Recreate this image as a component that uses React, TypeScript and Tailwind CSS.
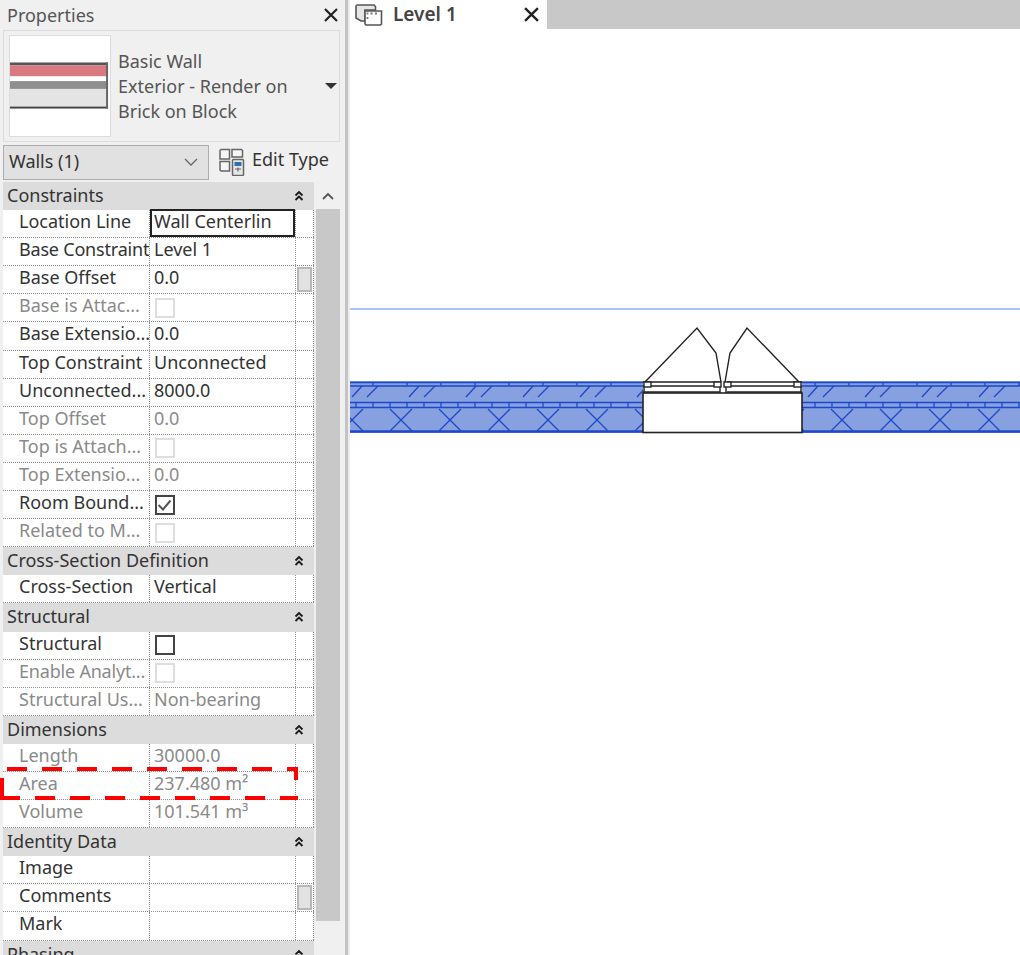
const font = { fontFamily: '"Noto Sans", sans-serif' };

type Row = { label: string; value?: string; dim?: boolean; check?: 'on' | 'off' | 'dim'; edit?: boolean; thumb?: boolean; tight?: boolean };
type Group = { title: string; rows: Row[] };

const groups: Group[] = [
	{
		title: 'Constraints',
		rows: [
			{ label: 'Location Line', value: 'Wall Centerlin', edit: true },
			{ label: 'Base Constraint', value: 'Level 1', tight: true },
			{ label: 'Base Offset', value: '0.0', thumb: true },
			{ label: 'Base is Attac...', dim: true, check: 'dim' },
			{ label: 'Base Extensio...', value: '0.0' },
			{ label: 'Top Constraint', value: 'Unconnected' },
			{ label: 'Unconnected...', value: '8000.0' },
			{ label: 'Top Offset', value: '0.0', dim: true },
			{ label: 'Top is Attach...', dim: true, check: 'dim' },
			{ label: 'Top Extensio...', value: '0.0', dim: true },
			{ label: 'Room Bound...', check: 'on' },
			{ label: 'Related to M...', dim: true, check: 'dim' },
		],
	},
	{ title: 'Cross-Section Definition', rows: [{ label: 'Cross-Section', value: 'Vertical' }] },
	{
		title: 'Structural',
		rows: [
			{ label: 'Structural', check: 'off' },
			{ label: 'Enable Analyt...', dim: true, check: 'dim', tight: true },
			{ label: 'Structural Us...', value: 'Non-bearing', dim: true },
		],
	},
	{
		title: 'Dimensions',
		rows: [
			{ label: 'Length', value: '30000.0', dim: true },
			{ label: 'Area', value: '237.480 m²', dim: true },
			{ label: 'Volume', value: '101.541 m³', dim: true },
		],
	},
	{
		title: 'Identity Data',
		rows: [{ label: 'Image' }, { label: 'Comments', thumb: true }, { label: 'Mark' }],
	},
	{ title: 'Phasing', rows: [] },
];

const Chevrons = () => (
	<svg width="10" height="12" viewBox="0 0 10 12" fill="none" stroke="#1a1a1a" strokeWidth="1.8">
		<path d="M1.5 5.5 5 2l3.5 3.5M1.5 10 5 6.5 8.5 10" />
	</svg>
);

const Check = ({ kind }: { kind: 'on' | 'off' | 'dim' }) => (
	<div className={`w-[20px] h-[20px] ml-[5px] flex items-center justify-center bg-white border-2 ${kind === 'dim' ? 'border-[#dedede]' : 'border-[#444]'}`}>
		{kind === 'on' && (
			<svg width="16" height="16" viewBox="0 0 16 16" fill="none" stroke="#555" strokeWidth="2">
				<path d="M1.5 8 6 12.5 13.5 3.5" />
			</svg>
		)}
	</div>
);

const PropRow = ({ row }: { row: Row }) => {
	const color = row.dim ? 'text-[#8a8a8a]' : 'text-[#333]';
	return (
		<div className="flex h-[28.1px] bg-white border-b border-dotted border-[#8f8f8f] shrink-0">
			<div className={`w-[147px] shrink-0 pl-[16px] overflow-hidden whitespace-nowrap leading-[23px] border-r border-dotted border-[#8f8f8f] ${color} ${row.tight ? 'tracking-[-0.2px]' : ''}`}>
				{row.label}
			</div>
			<div className={`w-[146px] shrink-0 border-r border-dotted border-[#8f8f8f] flex items-center whitespace-nowrap ${color}`}>
				{row.edit ? (
					<div className="w-[145px] h-[28px] border-2 border-[#222] pl-[2px] leading-[21px] mt-[-2px] text-[#333]">{row.value}</div>
				) : row.check ? (
					<Check kind={row.check} />
				) : (
					<span className="pl-[4px] leading-[23px] self-start">{row.value}</span>
				)}
			</div>
			<div className="flex-1 border-r border-dotted border-[#8f8f8f] flex items-center justify-center">
				{row.thumb && <div className="w-[15px] h-[25px] bg-[#e2e2e2] border-2 border-[#b8b8b8]" />}
			</div>
		</div>
	);
};

const WallThumb = () => (
	<svg width="102" height="102" viewBox="0 0 102 102" className="bg-white border border-[#dcdcdc] shrink-0">
		<rect x="0" y="27" width="100" height="3" fill="#555" />
		<rect x="0" y="30" width="100" height="11" fill="#d97a82" />
		<rect x="0" y="46" width="100" height="8" fill="#8f8f8f" />
		<rect x="0" y="54" width="100" height="18" fill="#e4e4e4" />
		<rect x="0" y="72" width="100" height="2" fill="#444" />
		<rect x="98" y="27" width="2" height="47" fill="#666" />
	</svg>
);

const EditTypeIcon = () => (
	<svg width="26" height="28" viewBox="0 0 26 28" fill="none" stroke="#666" strokeWidth="1.5">
		<path d="M2 1.5h8.5v9.5H1V2.5z" fill="#f6f6f6" />
		<path d="M13 1.5h9.5l1 1V9H13z" fill="#f6f6f6" />
		<path d="M1 13.5h9.5V23H2l-1-1z" fill="#f6f6f6" />
		<rect x="13.5" y="11.5" width="11" height="16" rx="1" fill="#e8e8e8" />
		<rect x="15.5" y="14" width="7" height="4" fill="#2f6fb5" stroke="none" />
		<path d="M16 21h6M19 19.5v4" strokeWidth="1.2" />
	</svg>
);

const ViewIcon = () => (
	<svg width="28" height="22" viewBox="0 0 28 22" fill="none" stroke="#555" strokeWidth="1.6">
		<path d="M2 1h17l1.5 1.5V6H10v11H6L1 14V2z" fill="#e6e6e6" />
		<path d="M10 7h16.5v13l-1 1H11l-1-1z" fill="#fff" />
		<path d="M12.5 8.5v2M12.5 13v2M15.5 9.5h2M20 9.5h2" stroke="#777" strokeWidth="1.8" />
	</svg>
);

const Close = ({ size }: { size: number }) => (
	<svg width={size} height={size} viewBox="0 0 14 14" fill="none" stroke="#222" strokeWidth="2.2">
		<path d="M1 1l12 12M13 1 1 13" />
	</svg>
);

const pairs = Array.from({ length: 12 }, (_, i) => i);
const topTicks = Array.from({ length: 20 }, (_, i) => i);
const midTicks = Array.from({ length: 40 }, (_, i) => i);
const crosses = Array.from({ length: 14 }, (_, i) => i);

// wall in plan, canvas coordinates start at x=350 y=29
const WallDrawing = () => (
	<svg width="670" height="926" viewBox="350 29 670 926" className="block">
		<line x1="350" y1="309" x2="1020" y2="309" stroke="#aac4f5" strokeWidth="2" />
		<rect x="350" y="381" width="670" height="52" fill="#86a0e0" />
		<g stroke="#1f48c8" fill="none" strokeWidth="1.3">
			<path d="M350 382.5h670M350 386h670" strokeWidth="1.6" />
			<path d="M350 402.5h670M350 407.5h670" strokeWidth="1.6" />
			<path d="M350 431.5h670" strokeWidth="2.5" />
			{topTicks.map((i) => (
				<path key={`t${i}`} d={`M${373 + i * 34} 382v4`} />
			))}
			{midTicks.map((i) => (
				<path key={`m${i}`} d={`M${356 + i * 17} 402v5`} />
			))}
			{pairs.map((i) => (
				<path key={`p${i}`} d={`M${352 + i * 57} 397l10-11M${367 + i * 57} 397l11-11`} />
			))}
			{crosses.map((i) => (
				<path key={`x${i}`} d={`M${341 + i * 49} 431l22-22M${341 + i * 49} 409l22 22`} />
			))}
		</g>
		<rect x="643" y="380" width="159" height="53" fill="#fff" />
		<g stroke="#222" fill="none" strokeWidth="1.4">
			<rect x="643" y="393" width="159" height="39.5" strokeWidth="1.6" />
			<path d="M643 382h77M727 382h75M643 386h77M727 386h75M643 392h77M727 392h75" />
			<rect x="644" y="382" width="7" height="5" fill="#fff" />
			<rect x="794" y="382" width="7" height="5" fill="#fff" />
			<rect x="714" y="382" width="7" height="5" fill="#fff" />
			<rect x="724" y="382" width="7" height="5" fill="#fff" />
			<path d="M720 387v6M726 387v6M644 387v6M801 387v6" />
			<path d="M645 382 697 328 716 353 721 382" />
			<path d="M799 382 747 328 730 353 725 382" />
		</g>
	</svg>
);

export default function App() {
	return (
		<div className="relative w-[1020px] h-[955px] overflow-hidden flex bg-white text-[18px] text-[#333]" style={font}>
			<div className="w-[345px] shrink-0 bg-[#f0f0f0] flex flex-col pl-[3px]">
				<div className="h-[30px] shrink-0 flex items-center justify-between pl-[4px] pr-[7px] text-[#555]">
					<span>Properties</span>
					<Close size={14} />
				</div>
				<div className="w-[337px] h-[112px] shrink-0 border border-[#dcdcdc] flex items-center pl-[5px]">
					<WallThumb />
					<div className="ml-[7px] flex-1 leading-[25px] text-[#555]">
						Basic Wall
						<br />
						Exterior - Render on
						<br />
						Brick on Block
					</div>
					<div className="mr-[2px] w-0 h-0 border-x-[6px] border-x-transparent border-t-[6px] border-t-[#333]" />
				</div>
				<div className="h-[38px] shrink-0 flex items-center mt-[1px]">
					<div className="w-[206px] h-[35px] bg-[#e1e1e1] border border-[#adadad] flex items-center justify-between pl-[5px] pr-[10px] leading-[24px]">
						<span className="mt-[-2px]">Walls (1)</span>
						<svg width="14" height="8" viewBox="0 0 14 8" fill="none" stroke="#666" strokeWidth="1.3">
							<path d="M1 1l6 6 6-6" />
						</svg>
					</div>
					<div className="ml-[10px] flex">
						<EditTypeIcon />
					</div>
					<span className="ml-[7px] mt-[-5px] text-[#333]">Edit Type</span>
				</div>
				<div className="flex flex-1 min-h-0 mt-[1px]">
					<div className="w-[311px] shrink-0 flex flex-col">
						{groups.map((g) => (
							<div key={g.title}>
								<div className="h-[28.1px] bg-[#dcdcdc] flex items-center justify-between pl-[4px] pr-[10px]">
									<span className="text-[#333] mt-[-1px]">{g.title}</span>
									<Chevrons />
								</div>
								{g.rows.map((r) => (
									<PropRow key={r.label} row={r} />
								))}
							</div>
						))}
					</div>
					<div className="w-[24px] ml-[2px] flex flex-col">
						<div className="h-[27px] flex items-center justify-center shrink-0">
							<svg width="12" height="8" viewBox="0 0 12 8" fill="none" stroke="#555" strokeWidth="1.8">
								<path d="M1 7l5-5 5 5" />
							</svg>
						</div>
						<div className="h-[712px] bg-[#c8c8c8] shrink-0" />
					</div>
				</div>
			</div>
			<div className="w-[5px] shrink-0 bg-[#c4c4c4] border-r-[2px] border-[#ededed]" />
			<div className="flex-1 flex flex-col min-w-0">
				<div className="h-[29px] shrink-0 bg-[#c8c8c8] flex">
					<div className="w-[197px] bg-white flex items-center pl-[5px]">
						<ViewIcon />
						<span className="ml-[10px] text-[19px] text-[#444] font-semibold">Level 1</span>
						<span className="ml-auto mr-[8px]">
							<Close size={15} />
						</span>
					</div>
				</div>
				<WallDrawing />
			</div>
			<svg width="300" height="36" viewBox="0 0 300 36" className="absolute left-0 top-[766px]" fill="none" stroke="#ff0000" strokeWidth="4">
				<path d="M7 3h291" strokeDasharray="20 15" />
				<path d="M296 1v13" />
				<path d="M2 12v22" />
				<path d="M0 32h298" strokeDasharray="20 15" />
			</svg>
		</div>
	);
}
